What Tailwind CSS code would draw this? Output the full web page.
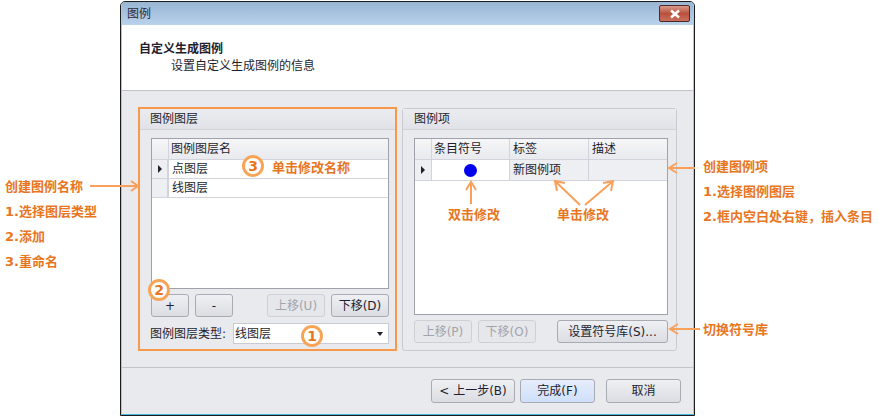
<!DOCTYPE html>
<html lang="zh-CN">
<head>
  <meta charset="UTF-8">
  <title>图例</title>
  <script src="https://cdn.jsdelivr.net/npm/@tailwindcss/browser@4"></script>
</head>
<body class="bg-white">
<div class="relative w-[879px] h-[416px] overflow-hidden bg-white text-[12px] leading-[16px] text-[#1e1e2e] font-['DejaVu_Sans','Noto_Sans_CJK_SC',sans-serif]">

  <!-- dialog -->
  <div class="ml-[120px] mt-px w-[575px] h-[415px] border border-[#1c1c1c] rounded-t-[5px] overflow-hidden">
    <div class="h-full flex flex-col border-x border-[#a5c8e8] border-b border-b-[#45b4de]">
      <div class="h-[23px] shrink-0 flex items-center justify-between pl-[5px] pr-[3px] bg-gradient-to-b from-[#99b5d2] to-[#b9d2ec]">
        <span class="text-[#2a2a3a]">图例</span>
        <div class="w-[31px] h-[17px] flex items-center justify-center rounded-[2px] border border-[#4a2a2a] bg-gradient-to-b from-[#d99a8c] via-[#b9503c] to-[#c8705c]">
          <svg width="12" height="10" viewBox="0 0 12 10"><path d="M2 1.5 L10 8.5 M10 1.5 L2 8.5" stroke="#fff" stroke-width="2.6"/></svg>
        </div>
      </div>

      <div class="h-[66px] shrink-0 bg-white border-b border-[#c3c4c9] pl-[17px] pt-[16px]">
        <div class="font-bold leading-[17px]">自定义生成图例</div>
        <div class="pl-[32px] leading-[17px]">设置自定义生成图例的信息</div>
      </div>

      <div class="flex-1 bg-[#e9eaee] flex flex-col">
        <div class="flex items-start pl-[16px] pt-[16px] gap-[5px] h-[277px] border-b border-[#c3c4c9]">

          <!-- layer group -->
          <section class="w-[259px] h-[244px] border-2 border-[#f7984a] flex flex-col">
            <div class="h-[21px] shrink-0 border-b border-[#d2d3d8] pl-[10px] pt-[2px] bg-gradient-to-b from-[#ebecf0] to-[#e1e2e7]">图例图层</div>
            <div class="ml-[11px] mt-[8px] w-[238px] h-[151px] bg-white border border-[#a0a2ab]">
              <div class="flex h-[21px] border-b border-[#d2d3dc] bg-gradient-to-b from-[#f6f6f8] to-[#e9eaee]">
                <div class="w-[17px] border-r border-[#d2d3dc]"></div>
                <div class="pl-[2px] pt-[2px]">图例图层名</div>
              </div>
              <div class="flex h-[19px] border-b border-[#d2d3dc]">
                <div class="w-[17px] border-r-2 border-[#d2d3dc] bg-[#eeeff2] flex items-center justify-center">
                  <span class="w-0 h-0 border-y-[4px] border-y-transparent border-l-[4px] border-l-[#1e2030]"></span>
                </div>
                <div class="pl-[3px] pt-[1px]">点图层</div>
              </div>
              <div class="flex h-[19px] border-b border-[#d2d3dc]">
                <div class="w-[17px] border-r-2 border-[#d2d3dc] bg-[#eeeff2]"></div>
                <div class="pl-[3px] pt-[1px]">线图层</div>
              </div>
            </div>
            <div class="ml-[11px] mt-[5px] w-[238px] flex">
              <button class="w-[38px] h-[23px] rounded-[3px] border border-[#a9abb3] bg-gradient-to-b from-[#eff0f3] to-[#dcdde3]">+</button>
              <button class="ml-[6px] w-[38px] h-[23px] rounded-[3px] border border-[#a9abb3] bg-gradient-to-b from-[#eff0f3] to-[#dcdde3]">-</button>
              <button class="ml-[34px] w-[58px] h-[23px] rounded-[3px] border border-[#cfd0d6] bg-[#e6e7eb] text-[#a2a4ac]">上移(U)</button>
              <button class="ml-[6px] w-[58px] h-[23px] rounded-[3px] border border-[#a9abb3] bg-gradient-to-b from-[#eff0f3] to-[#dcdde3]">下移(D)</button>
            </div>
            <div class="ml-[10px] mt-[6px] w-[239px] flex items-center">
              <span class="w-[83px]">图例图层类型:</span>
              <div class="w-[156px] h-[21px] bg-white border border-[#c9cad2] pl-px flex items-center justify-between pr-[5px]">
                <span>线图层</span>
                <span class="w-0 h-0 border-x-[3px] border-x-transparent border-t-[4px] border-t-[#1e2030]"></span>
              </div>
            </div>
          </section>

          <!-- item group -->
          <section class="mt-px w-[275px] h-[243px] border border-[#c9cad1] rounded-[3px] flex flex-col">
            <div class="h-[21px] shrink-0 border-b border-[#d2d3d8] pl-[11px] pt-[2px] bg-gradient-to-b from-[#ebecf0] to-[#e1e2e7]">图例项</div>
            <div class="ml-[11px] mt-[8px] w-[254px] h-[177px] bg-white border border-[#a0a2ab]">
              <div class="flex h-[21px] border-b border-[#d2d3dc] bg-gradient-to-b from-[#f6f6f8] to-[#e9eaee]">
                <div class="w-[17px] border-r border-[#d2d3dc]"></div>
                <div class="w-[78px] border-r border-[#d2d3dc] pl-[2px] pt-[2px]">条目符号</div>
                <div class="w-[79px] border-r border-[#d2d3dc] pl-[3px] pt-[2px]">标签</div>
                <div class="pl-[3px] pt-[2px]">描述</div>
              </div>
              <div class="flex h-[21px] border-b border-[#d2d3dc]">
                <div class="w-[17px] border-r border-[#d2d3dc] bg-[#eeeff2] flex items-center justify-center">
                  <span class="w-0 h-0 border-y-[4px] border-y-transparent border-l-[4px] border-l-[#1e2030]"></span>
                </div>
                <div class="w-[78px] border-r border-[#d2d3dc] flex items-center justify-center">
                  <span class="w-[13px] h-[13px] rounded-full bg-[#0000f0]"></span>
                </div>
                <div class="w-[79px] border-r border-[#d2d3dc] bg-[#eeeff2] pl-[3px] pt-[2px]">新图例项</div>
                <div class="flex-1 bg-[#eeeff2]"></div>
              </div>
            </div>
            <div class="ml-[11px] mt-[5px] w-[254px] flex">
              <button class="w-[58px] h-[23px] rounded-[3px] border border-[#cfd0d6] bg-[#e6e7eb] text-[#a2a4ac]">上移(P)</button>
              <button class="ml-[6px] w-[58px] h-[23px] rounded-[3px] border border-[#cfd0d6] bg-[#e6e7eb] text-[#a2a4ac]">下移(O)</button>
              <button class="ml-[21px] w-[111px] h-[23px] rounded-[3px] border border-[#a9abb3] bg-gradient-to-b from-[#eff0f3] to-[#dcdde3]">设置符号库(S)...</button>
            </div>
          </section>
        </div>

        <!-- footer buttons -->
        <div class="flex pl-[309px] pt-[11px]">
          <button class="w-[84px] h-[24px] rounded-[3px] border border-[#a9abb3] bg-gradient-to-b from-[#eff0f3] to-[#dcdde3]">&lt; 上一步(B)</button>
          <button class="ml-[5px] w-[75px] h-[24px] rounded-[3px] border border-[#a9abb3] bg-gradient-to-b from-[#e6edfb] to-[#cfdffa]">完成(F)</button>
          <button class="ml-[11px] w-[75px] h-[24px] rounded-[3px] border border-[#a9abb3] bg-gradient-to-b from-[#eff0f3] to-[#dcdde3]">取消</button>
        </div>
      </div>
    </div>
  </div>

  <!-- callout arrows -->
  <svg class="absolute left-0 top-0 pointer-events-none" width="879" height="416" fill="none" stroke="#f9a05a" stroke-width="2">
    <path d="M90 186 H137 M131 181 L138 186 L131 191"/>
    <path d="M695 168 H670 M677 163 L669 168 L677 173"/>
    <path d="M700 329 H671 M678 324 L670 329 L678 334"/>
    <path d="M471 204 V183 M466 190 L471 182 L476 190"/>
    <path d="M580 205 L556 182 M557 191 L555 181 L565 183"/>
    <path d="M585 205 L612 182 M603 183 L613 181 L611 191"/>
  </svg>

  <!-- callout text -->
  <div class="absolute left-[5px] top-[179px] text-[13px] font-bold text-[#e8761e]">创建图例名称</div>
  <div class="absolute left-[5px] top-[204px] text-[13px] font-bold text-[#e8761e]">1.选择图层类型</div>
  <div class="absolute left-[5px] top-[229px] text-[13px] font-bold text-[#e8761e]">2.添加</div>
  <div class="absolute left-[5px] top-[254px] text-[13px] font-bold text-[#e8761e]">3.重命名</div>
  <div class="absolute left-[703px] top-[159px] text-[13px] font-bold text-[#e8761e]">创建图例项</div>
  <div class="absolute left-[703px] top-[184px] text-[13px] font-bold text-[#e8761e]">1.选择图例图层</div>
  <div class="absolute left-[703px] top-[209px] text-[13px] font-bold text-[#e8761e]">2.框内空白处右键，插入条目</div>
  <div class="absolute left-[703px] top-[322px] text-[13px] font-bold text-[#e8761e]">切换符号库</div>
  <div class="absolute left-[272px] top-[160px] text-[13px] font-bold text-[#e8761e]">单击修改名称</div>
  <div class="absolute left-[448px] top-[207px] text-[13px] font-bold text-[#e8761e]">双击修改</div>
  <div class="absolute left-[557px] top-[207px] text-[13px] font-bold text-[#e8761e]">单击修改</div>

  <!-- numbered badges -->
  <div class="absolute left-[242px] top-[155px] w-[22px] h-[22px] rounded-full bg-white border-[3px] border-[#f7a457] flex items-center justify-center font-bold text-[14px] text-[#e8761e]">3</div>
  <div class="absolute left-[148px] top-[279px] w-[22px] h-[22px] rounded-full bg-white border-[3px] border-[#f7a457] flex items-center justify-center font-bold text-[14px] text-[#e8761e]">2</div>
  <div class="absolute left-[301px] top-[325px] w-[22px] h-[22px] rounded-full bg-white border-[3px] border-[#f7a457] flex items-center justify-center font-bold text-[14px] text-[#e8761e]">1</div>
</div>
</body>
</html>
